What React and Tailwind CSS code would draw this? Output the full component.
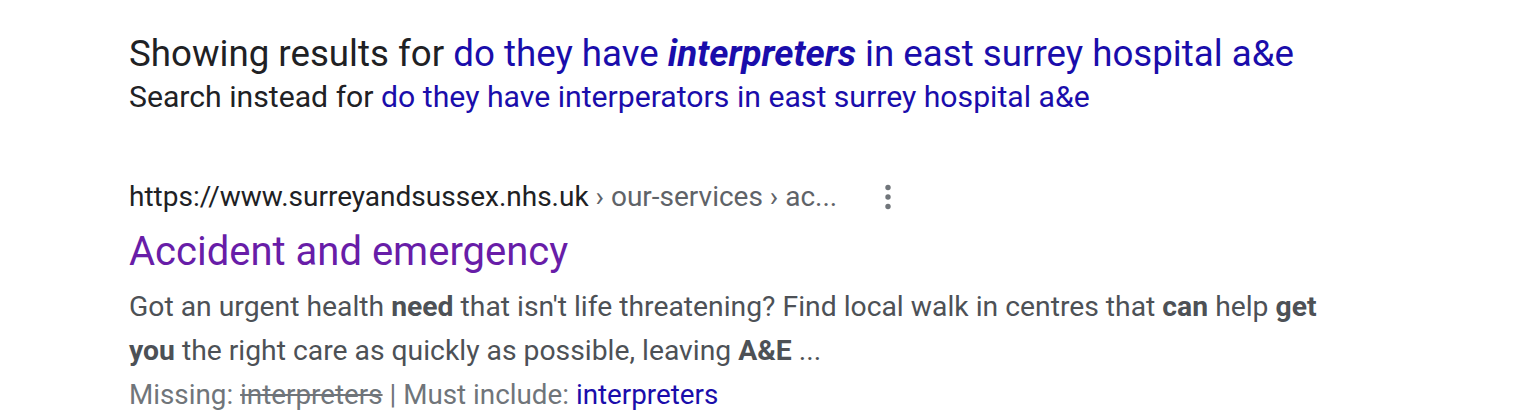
export default function App() {
  return (
    <div className="w-[1519px] h-[417px] bg-white overflow-hidden pl-[129px] pt-[32px]" style={{ fontFamily: 'Roboto, "Liberation Sans", Arial, sans-serif' }}>
      <div className="text-[36.7px] leading-[44px] text-[#202124] whitespace-nowrap">
        Showing results for{" "}
        <a className="text-[#1a0dab]">
          do they have <b className="italic font-bold">interpreters</b> in east surrey hospital a&amp;e
        </a>
      </div>
      <div className="text-[30.2px] leading-[42px] text-[#202124] whitespace-nowrap">
        Search instead for{" "}
        <a className="text-[#1a0dab]">do they have interperators in east surrey hospital a&amp;e</a>
      </div>
      <div className="mt-[59px] w-[763px] flex items-center justify-between h-[40px]">
        <div className="text-[28px] text-[#202124] whitespace-nowrap">
          https://www.surreyandsussex.nhs.uk
          <span className="text-[#5f6368]"> › our-services › ac...</span>
        </div>
        <svg width="8" height="26" viewBox="0 0 8 26">
          <circle cx="4" cy="3.5" r="2.7" fill="#70757a" />
          <circle cx="4" cy="13" r="2.7" fill="#70757a" />
          <circle cx="4" cy="22.5" r="2.7" fill="#70757a" />
        </svg>
      </div>
      <div className="text-[40px] leading-[50px] mt-[10px] text-[#681da8] whitespace-nowrap">Accident and emergency</div>
      <div className="text-[28.3px] leading-[44px] text-[#4d5156] mt-[8px] whitespace-nowrap">
        Got an urgent health <b className="font-bold">need</b> that isn't life threatening? Find local walk in centres that <b className="font-bold">can</b> help <b className="font-bold">get</b>
        <br />
        <b className="font-bold">you</b> the right care as quickly as possible, leaving <b className="font-bold">A&amp;E</b> ...
      </div>
      <div className="text-[27.8px] leading-[44px] text-[#70757a] whitespace-nowrap">
        Missing: <span className="line-through">interpreters</span> | Must include:{" "}
        <a className="text-[#1a0dab]">interpreters</a>
      </div>
    </div>
  );
}
